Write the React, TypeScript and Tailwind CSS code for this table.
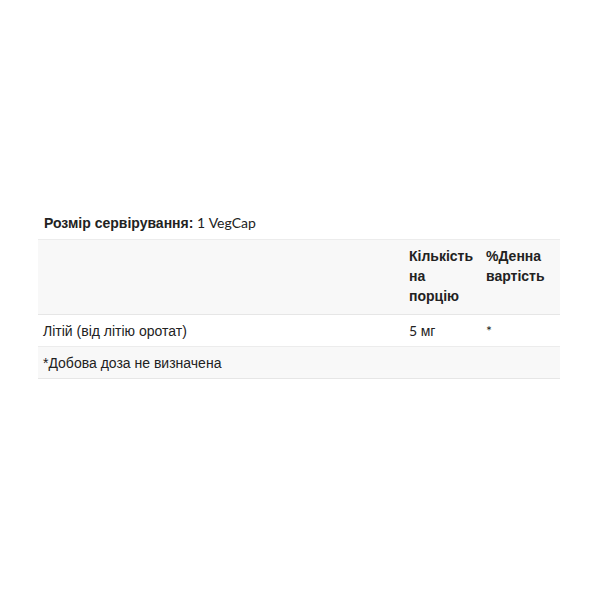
import React from "react";

const cy = "font-['Liberation_Sans',sans-serif]";

export default function App() {
  return (
    <div className="w-[600px] h-[600px] bg-white font-['Lato','Liberation_Sans',sans-serif] text-[14px] text-[#222] pt-[213px] pl-[38px]">
      <div className="w-[522px]">
        <div className="px-[6px] pb-[6px] leading-[20px] border-b border-[#ececec]">
          <span className={`${cy} font-bold`}>Розмір сервірування:</span> 1 VegCap
        </div>
        <table className="w-full border-collapse">
          <tbody>
            <tr className="bg-[#f8f8f8] border-b border-[#e6e6e6]">
              <td className="w-[366px] px-[5px] py-[7px]"></td>
              <td className={`w-[77px] px-[5px] pt-[6px] pb-[8px] align-top font-bold leading-[20px] ${cy}`}>
                Кількість
                <br />
                на
                <br />
                порцію
              </td>
              <td className={`px-[5px] pt-[6px] pb-[8px] align-top font-bold leading-[20px] ${cy}`}>
                %Денна
                <br />
                вартість
              </td>
            </tr>
            <tr className="border-b border-[#ececec]">
              <td className={`h-[32px] px-[5px] leading-[20px] ${cy}`}>Літій (від літію оротат)</td>
              <td className="px-[5px] leading-[20px]">
                5 <span className={cy}>мг</span>
              </td>
              <td className="px-[5px] leading-[20px]">*</td>
            </tr>
            <tr className="bg-[#f8f8f8] border-b border-[#e6e6e6]">
              <td className={`h-[32px] px-[5px] leading-[20px] ${cy}`} colSpan={1}>
                *Добова доза не визначена
              </td>
              <td></td>
              <td></td>
            </tr>
          </tbody>
        </table>
      </div>
    </div>
  );
}
